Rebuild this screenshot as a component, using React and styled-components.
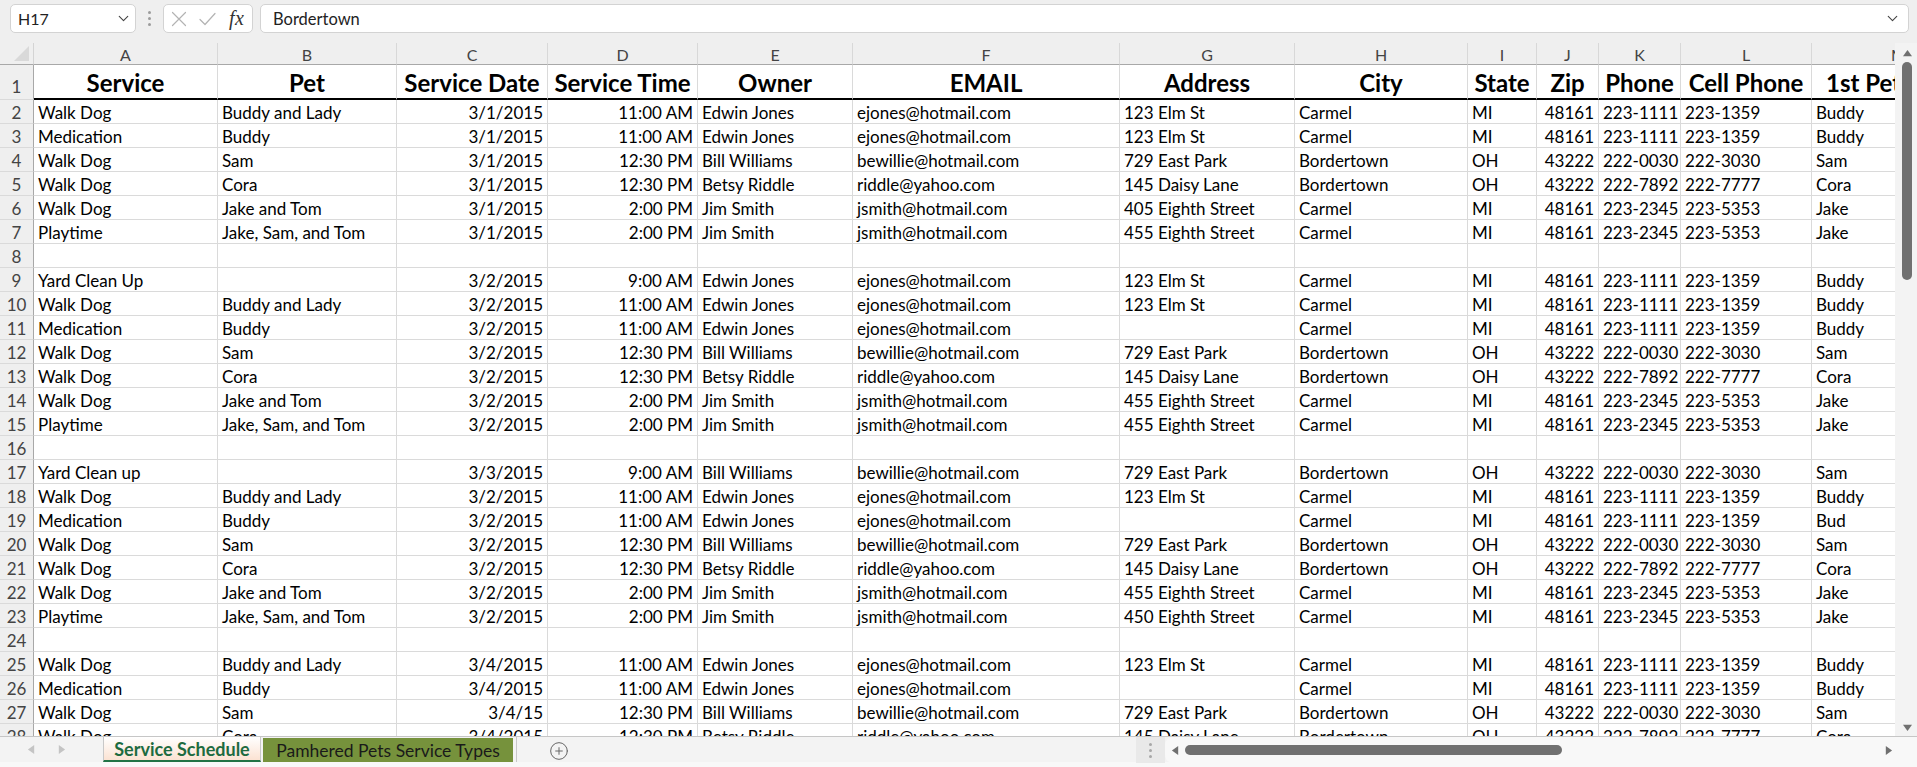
import React from 'react';
import styled, { createGlobalStyle } from 'styled-components';
import { ChevronDown, CirclePlus } from 'lucide-react';

const GlobalStyle = createGlobalStyle`
  html, body { margin: 0; padding: 0; background: #efefef; overflow: hidden; }
  body { font-family: Lato, "Liberation Sans", sans-serif; }
  #root { width: 1917px; height: 767px; }
  * { box-sizing: border-box; }
`;

const COLS = [
  { k: 'A', w: 184, a: 'left' },
  { k: 'B', w: 179, a: 'left' },
  { k: 'C', w: 151, a: 'right' },
  { k: 'D', w: 150, a: 'right' },
  { k: 'E', w: 155, a: 'left' },
  { k: 'F', w: 267, a: 'left' },
  { k: 'G', w: 175, a: 'left' },
  { k: 'H', w: 173, a: 'left' },
  { k: 'I', w: 69, a: 'left' },
  { k: 'J', w: 62, a: 'right' },
  { k: 'K', w: 82, a: 'left' },
  { k: 'L', w: 131, a: 'left' },
  { k: 'M', w: 174, a: 'left' },
];

const HEAD = ['Service', 'Pet', 'Service Date', 'Service Time', 'Owner', 'EMAIL', 'Address', 'City', 'State', 'Zip', 'Phone', 'Cell Phone', '1st Pet'];

const EJ = ['Edwin Jones', 'ejones@hotmail.com'];
const BW = ['Bill Williams', 'bewillie@hotmail.com'];
const BR = ['Betsy Riddle', 'riddle@yahoo.com'];
const JS = ['Jim Smith', 'jsmith@hotmail.com'];
const CAR_E = ['Carmel', 'MI', '48161', '223-1111', '223-1359'];
const BOR_W = ['Bordertown', 'OH', '43222', '222-0030', '222-3030'];
const BOR_R = ['Bordertown', 'OH', '43222', '222-7892', '222-7777'];
const CAR_J = ['Carmel', 'MI', '48161', '223-2345', '223-5353'];

const ROWS = [
  ['Walk Dog', 'Buddy and Lady', '3/1/2015', '11:00 AM', ...EJ, '123 Elm St', ...CAR_E, 'Buddy'],
  ['Medication', 'Buddy', '3/1/2015', '11:00 AM', ...EJ, '123 Elm St', ...CAR_E, 'Buddy'],
  ['Walk Dog', 'Sam', '3/1/2015', '12:30 PM', ...BW, '729 East Park', ...BOR_W, 'Sam'],
  ['Walk Dog', 'Cora', '3/1/2015', '12:30 PM', ...BR, '145 Daisy Lane', ...BOR_R, 'Cora'],
  ['Walk Dog', 'Jake and Tom', '3/1/2015', '2:00 PM', ...JS, '405 Eighth Street', ...CAR_J, 'Jake'],
  ['Playtime', 'Jake, Sam, and Tom', '3/1/2015', '2:00 PM', ...JS, '455 Eighth Street', ...CAR_J, 'Jake'],
  null,
  ['Yard Clean Up', '', '3/2/2015', '9:00 AM', ...EJ, '123 Elm St', ...CAR_E, 'Buddy'],
  ['Walk Dog', 'Buddy and Lady', '3/2/2015', '11:00 AM', ...EJ, '123 Elm St', ...CAR_E, 'Buddy'],
  ['Medication', 'Buddy', '3/2/2015', '11:00 AM', ...EJ, '', ...CAR_E, 'Buddy'],
  ['Walk Dog', 'Sam', '3/2/2015', '12:30 PM', ...BW, '729 East Park', ...BOR_W, 'Sam'],
  ['Walk Dog', 'Cora', '3/2/2015', '12:30 PM', ...BR, '145 Daisy Lane', ...BOR_R, 'Cora'],
  ['Walk Dog', 'Jake and Tom', '3/2/2015', '2:00 PM', ...JS, '455 Eighth Street', ...CAR_J, 'Jake'],
  ['Playtime', 'Jake, Sam, and Tom', '3/2/2015', '2:00 PM', ...JS, '455 Eighth Street', ...CAR_J, 'Jake'],
  null,
  ['Yard Clean up', '', '3/3/2015', '9:00 AM', ...BW, '729 East Park', ...BOR_W, 'Sam'],
  ['Walk Dog', 'Buddy and Lady', '3/2/2015', '11:00 AM', ...EJ, '123 Elm St', ...CAR_E, 'Buddy'],
  ['Medication', 'Buddy', '3/2/2015', '11:00 AM', ...EJ, '', ...CAR_E, 'Bud'],
  ['Walk Dog', 'Sam', '3/2/2015', '12:30 PM', ...BW, '729 East Park', ...BOR_W, 'Sam'],
  ['Walk Dog', 'Cora', '3/2/2015', '12:30 PM', ...BR, '145 Daisy Lane', ...BOR_R, 'Cora'],
  ['Walk Dog', 'Jake and Tom', '3/2/2015', '2:00 PM', ...JS, '455 Eighth Street', ...CAR_J, 'Jake'],
  ['Playtime', 'Jake, Sam, and Tom', '3/2/2015', '2:00 PM', ...JS, '450 Eighth Street', ...CAR_J, 'Jake'],
  null,
  ['Walk Dog', 'Buddy and Lady', '3/4/2015', '11:00 AM', ...EJ, '123 Elm St', ...CAR_E, 'Buddy'],
  ['Medication', 'Buddy', '3/4/2015', '11:00 AM', ...EJ, '', ...CAR_E, 'Buddy'],
  ['Walk Dog', 'Sam', '3/4/15', '12:30 PM', ...BW, '729 East Park', ...BOR_W, 'Sam'],
  ['Walk Dog', 'Cora', '3/4/2015', '12:30 PM', ...BR, '145 Daisy Lane', ...BOR_R, 'Cora'],
];

/* ---------- top formula bar ---------- */
const Page = styled.div`
  width: 1917px;
  height: 767px;
  display: flex;
  flex-direction: column;
  background: #efefef;
`;

const FormulaBar = styled.div`
  height: 43px;
  display: flex;
  align-items: flex-start;
  padding: 4px 8px 0 10px;
`;

const Box = styled.div`
  height: 29px;
  background: #fff;
  border: 1px solid #d3d3d3;
  border-radius: 5px;
  display: flex;
  align-items: center;
  color: #222;
  font-size: 16px;
`;

const NameBox = styled(Box)`
  width: 126px;
  padding: 0 3px 0 7px;
  justify-content: space-between;
`;

const Grip = styled.div`
  width: 27px;
  height: 29px;
  display: flex;
  flex-direction: column;
  align-items: center;
  justify-content: center;
  gap: 3px;
  & span { width: 3px; height: 3px; border-radius: 50%; background: #9b9b9b; }
`;

const FxBox = styled(Box)`
  width: 90px;
  padding: 0 6px 0 7px;
  gap: 12px;
  margin-right: 7px;
  & svg { flex: none; display: block; }
`;

const Fx = styled.i`
  font-family: "Liberation Serif", "DejaVu Serif", serif;
  font-size: 20px;
  color: #333;
  letter-spacing: 0.5px;
  margin-left: 1px;
`;

const Input = styled(Box)`
  flex: 1;
  padding: 0 7px 0 12px;
  justify-content: space-between;
  font-size: 16.5px;
`;

/* ---------- sheet ---------- */
const Main = styled.div`
  height: 693px;
  display: flex;
`;

const Viewport = styled.div`
  width: 1895px;
  overflow: hidden;
  background: #fff;
`;

const Grid = styled.div`
  display: grid;
  grid-template-columns: 34px ${COLS.map((c) => c.w + 'px').join(' ')};
  grid-template-rows: 22px 35px repeat(27, 24px);
  width: max-content;
`;

const Corner = styled.div`
  background: #efefef;
  border-right: 1px solid #d4d4d4;
  border-bottom: 1px solid #a8a8a8;
  display: flex;
  align-items: flex-end;
  justify-content: flex-end;
  padding: 0 4px 3px 0;
`;

const ColHead = styled.div`
  background: #efefef;
  border-right: 1px solid #d8d8d8;
  border-bottom: 1px solid #a8a8a8;
  display: flex;
  align-items: center;
  justify-content: center;
  color: #444;
  font-size: 16px;
  padding-top: 1px;
`;

const RowHead = styled.div`
  background: #efefef;
  border-right: 1px solid #a8a8a8;
  border-bottom: 1px solid #dadada;
  display: flex;
  align-items: flex-end;
  justify-content: center;
  color: #444;
  font-size: 17px;
  line-height: 1;
  padding-bottom: ${(p) => (p.$head ? '4px' : '2px')};
`;

const Cell = styled.div`
  border-right: 1px solid #dadada;
  border-bottom: 1px solid #dadada;
  overflow: hidden;
  white-space: nowrap;
  display: flex;
  align-items: flex-end;
  justify-content: ${(p) => (p.$align === 'right' ? 'flex-end' : 'flex-start')};
  padding: 0 4px 2px 4px;
  font-size: 17px;
  line-height: 1;
  color: #000;
`;

const HeadCell = styled(Cell)`
  border-bottom: 2px solid #000;
  justify-content: ${(p) => (p.$left ? 'flex-start' : 'center')};
  padding: ${(p) => (p.$left ? '0 0 3px 14px' : '0 0 3px 0')};
  font-size: 24px;
  font-weight: 700;
`;

/* ---------- vertical scrollbar ---------- */
const VScroll = styled.div`
  flex: 1;
  display: flex;
  flex-direction: column;
  align-items: center;
  padding: 6px 0 4px 2px;
  background: #f3f3f3;
`;

const Thumb = styled.div`
  background: #707070;
  border-radius: 5px;
  width: ${(p) => (p.$h ? 'auto' : '10px')};
  height: ${(p) => (p.$h ? '10px' : 'auto')};
`;

const VThumb = styled(Thumb)`
  height: 218px;
  margin-top: 4px;
`;

const Spacer = styled.div`
  flex: 1;
`;

/* ---------- bottom tab bar ---------- */
const TabBar = styled.div`
  height: 31px;
  display: flex;
  align-items: flex-start;
  background: #f3f3f3;
  border-top: 1px solid #c6c6c6;
  border-bottom: 5px solid #f8f8f8;
`;

const Nav = styled.div`
  width: 103px;
  height: 25px;
  display: flex;
  align-items: center;
  padding-left: 27px;
  gap: 21px;
`;

const Tab = styled.div`
  height: 25px;
  display: flex;
  align-items: center;
  justify-content: center;
  font-size: 17.5px;
  white-space: nowrap;
`;

const ActiveTab = styled(Tab)`
  width: 158px;
  background: linear-gradient(#ffffff, #fbe2d2);
  border-left: 1px solid #c8c8c8;
  border-right: 1px solid #c8c8c8;
  border-bottom: 2px solid #217346;
  color: #1d6b40;
  font-weight: 700;
  font-size: 18px;
`;

const ColorTab = styled(Tab)`
  width: 250px;
  margin: 1px 0 0 2px;
  height: 24px;
  background: ${(p) => p.$bg};
  color: #1a1a1a;
`;

const TabSep = styled.div`
  width: 1px;
  height: 25px;
  background: #c8c8c8;
  margin-left: 3px;
`;

const AddBtn = styled.div`
  width: 84px;
  height: 25px;
  display: flex;
  align-items: center;
  justify-content: center;
  color: #666;
  padding-top: 3px;
`;

const HScroll = styled.div`
  margin-left: auto;
  width: 781px;
  height: 26px;
  display: flex;
  align-items: center;
`;

const HGrip = styled.div`
  width: 29px;
  height: 26px;
  background: #e9e9e9;
  display: flex;
  flex-direction: column;
  align-items: center;
  justify-content: center;
  gap: 3px;
  & span { width: 3px; height: 3px; border-radius: 50%; background: #a8a8a8; }
`;

const HTrack = styled.div`
  flex: 1;
  height: 26px;
  display: flex;
  align-items: center;
  padding: 0 24px 0 6px;
  background: #f8f8f8;
  border-radius: 8px 0 0 8px;
`;

const HThumb = styled(Thumb)`
  width: 377px;
  margin-left: 5px;
`;

const Tri = ({ dir, color = '#707070', size = 9 }) => {
  const pts = {
    up: '0,8 5,1 10,8',
    down: '0,2 10,2 5,9',
    left: '8,0 8,10 1,5',
    right: '2,0 2,10 9,5',
  }[dir];
  return (
    <svg width={size} height={size} viewBox="0 0 10 10">
      <polygon points={pts} fill={color} />
    </svg>
  );
};

const CancelIcon = () => (
  <svg width="16" height="16" viewBox="0 0 16 16" fill="none" stroke="#b3b3b3" strokeWidth="1.2" strokeLinecap="round">
    <path d="M1.5 1.5 L14.5 14.5 M14.5 1.5 L1.5 14.5" />
  </svg>
);

const EnterIcon = () => (
  <svg width="17" height="14" viewBox="0 0 17 14" fill="none" stroke="#b3b3b3" strokeWidth="1.2" strokeLinecap="round" strokeLinejoin="round">
    <path d="M1 7.5 L6 12.5 L16 1.5" />
  </svg>
);

export default function App() {
  return (
    <Page>
      <GlobalStyle />
      <FormulaBar>
        <NameBox>
          <span>H17</span>
          <ChevronDown size={17} strokeWidth={1.6} color="#444" />
        </NameBox>
        <Grip><span /><span /><span /></Grip>
        <FxBox>
          <CancelIcon />
          <EnterIcon />
          <Fx>fx</Fx>
        </FxBox>
        <Input>
          <span>Bordertown</span>
          <ChevronDown size={17} strokeWidth={1.6} color="#444" />
        </Input>
      </FormulaBar>

      <Main>
        <Viewport>
          <Grid>
            <Corner>
              <svg width="15" height="15" viewBox="0 0 15 15">
                <polygon points="15,0 15,15 0,15" fill="#d9d9d9" />
              </svg>
            </Corner>
            {COLS.map((c) => (
              <ColHead key={c.k}>{c.k}</ColHead>
            ))}

            <RowHead $head>1</RowHead>
            {HEAD.map((h, i) => (
              <HeadCell key={i} $left={i === 12}>{h}</HeadCell>
            ))}

            {ROWS.map((r, ri) => (
              <React.Fragment key={ri}>
                <RowHead>{ri + 2}</RowHead>
                {COLS.map((c, ci) => (
                  <Cell key={c.k} $align={c.a}>{r ? r[ci] : ''}</Cell>
                ))}
              </React.Fragment>
            ))}
          </Grid>
        </Viewport>
        <VScroll>
          <Tri dir="up" />
          <VThumb />
          <Spacer />
          <Tri dir="down" />
        </VScroll>
      </Main>

      <TabBar>
        <Nav>
          <Tri dir="left" color="#c4c4c4" size={9} />
          <Tri dir="right" color="#c4c4c4" size={9} />
        </Nav>
        <ActiveTab>Service Schedule</ActiveTab>
        <ColorTab $bg="#76923c">Pamhered Pets Service Types</ColorTab>
        <TabSep />
        <AddBtn>
          <CirclePlus size={20} strokeWidth={1.2} />
        </AddBtn>
        <HScroll>
          <HGrip><span /><span /><span /></HGrip>
          <HTrack>
            <Tri dir="left" />
            <HThumb $h />
            <Spacer />
            <Tri dir="right" />
          </HTrack>
        </HScroll>
      </TabBar>
    </Page>
  );
}
